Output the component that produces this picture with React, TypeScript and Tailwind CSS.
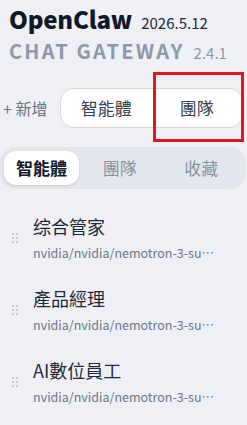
import React from "react";

const agents = [
  { name: "综合管家", model: "nvidia/nvidia/nemotron-3-super-120b-a12b" },
  { name: "產品經理", model: "nvidia/nvidia/nemotron-3-super-120b-a12b" },
  { name: "AI數位員工", model: "nvidia/nvidia/nemotron-3-super-120b-a12b" },
];

const Grip = () => (
  <div className="grid grid-cols-2 gap-x-[2px] gap-y-[2px] w-[6px]">
    {[0, 1, 2, 3, 4, 5].map((i) => (
      <span key={i} className="block w-[2px] h-[2px] bg-[#c3c9d3]" />
    ))}
  </div>
);

const App = () => {
  return (
    // sidebar
    <div
      className="relative w-[247px] h-[425px] overflow-hidden bg-[#eef0f5]"
      style={{ fontFamily: '"Noto Sans CJK TC", "Noto Sans", sans-serif' }}
    >
      {/* brand */}
      <div className="pl-[9px] pt-[3px]">
        <div className="flex items-baseline gap-[9px] leading-none h-[31px] pt-[4px]">
          <span className="text-[24px] font-black text-[#111827] tracking-[-0.2px]">OpenClaw</span>
          <span className="text-[15px] text-[#1f2937]">2026.5.12</span>
        </div>
        <div className="flex items-baseline gap-[9px] leading-none mt-[7px]">
          <span className="text-[20px] font-bold text-[#8d99aa] tracking-[2.2px]">CHAT GATEWAY</span>
          <span className="text-[15px] text-[#8d99aa]">2.4.1</span>
        </div>
      </div>

      {/* new + view toggle */}
      <div className="flex items-center mt-[27px] pl-[3px]">
        <span className="text-[16px] text-[#6b7280] w-[57px]">+ 新增</span>
        <div className="flex h-[40px] w-[183px] rounded-[14px] border border-[#d5d9e0] bg-white text-[17px] text-[#374151]">
          <div className="flex-1 flex items-center justify-center">智能體</div>
          <div className="flex-1 flex items-center justify-center">團隊</div>
        </div>
      </div>

      {/* highlight box */}
      <div className="absolute left-[153px] top-[72px] w-[91px] h-[70px] border-[3px] border-[#e3161b]" />

      {/* tabs */}
      <div className="mt-[19px] mr-[1px] h-[42px] rounded-[16px] bg-[#e2e6ed] p-[4px] flex text-[17px]">
        <div className="w-[75px] rounded-[12px] bg-white flex items-center justify-center font-bold text-[#111827] shadow-sm">
          智能體
        </div>
        <div className="flex-1 flex items-center justify-center text-[#8a93a0]">團隊</div>
        <div className="flex-1 flex items-center justify-center text-[#8a93a0]">收藏</div>
      </div>

      {/* agent list */}
      <div className="mt-[24px] flex flex-col gap-[23px]">
        {agents.map((a) => (
          <div key={a.name} className="flex items-center pl-[12px]">
            <Grip />
            <div className="ml-[15px] w-[186px]">
              <div className="text-[18px] leading-[26px] text-[#1f2937]">{a.name}</div>
              <div className="mt-[4px] text-[12.5px] leading-[19px] text-[#6b7789] truncate">{a.model}</div>
            </div>
          </div>
        ))}
      </div>
    </div>
  );
};

export default App;
